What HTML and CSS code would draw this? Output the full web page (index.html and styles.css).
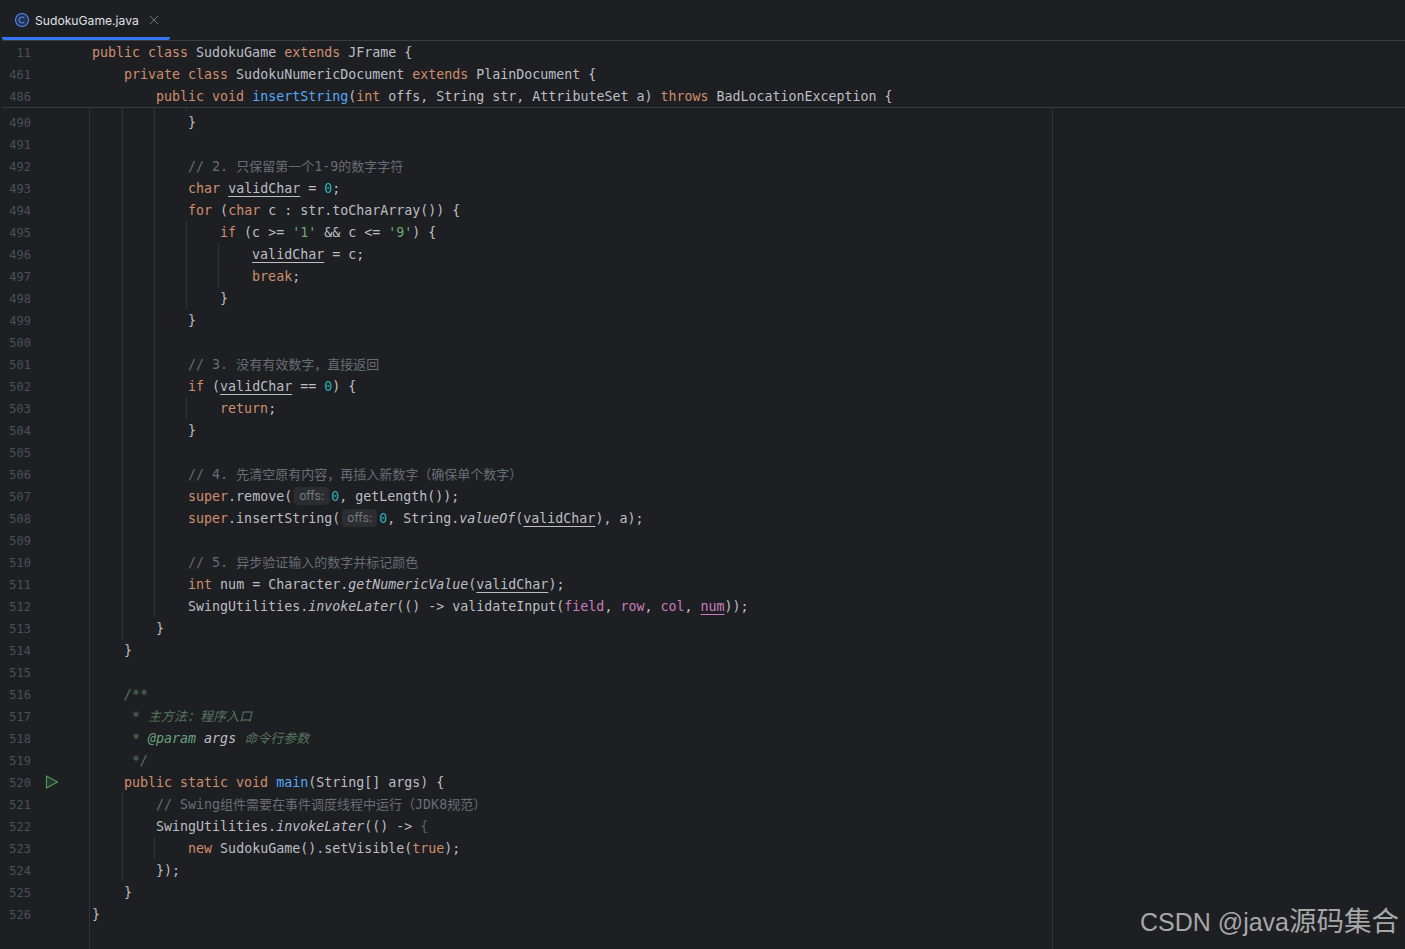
FILE: index.html
```html
<!DOCTYPE html>
<html lang="zh">
<head>
<meta charset="utf-8">
<title>SudokuGame.java</title>
<link rel="stylesheet" href="styles.css">
</head>
<body>
<div class="ide">
  <header class="tabbar">
    <div class="tab">
      <svg class="tab-icon" width="16" height="16" viewBox="0 0 16 16"><circle cx="8" cy="8" r="6.5" fill="#25324d" stroke="#548af7" stroke-width="1.1"/><path d="M10.4 6.1A3 3 0 1 0 10.4 9.9" fill="none" stroke="#548af7" stroke-width="1.1"/></svg>
      <span class="tab-name">SudokuGame.java</span>
      <svg class="tab-close" width="10" height="10" viewBox="0 0 10 10"><path d="M1 1L9 9M9 1L1 9" stroke="#6f737a" stroke-width="1"/></svg>
    </div>
  </header>
  <section class="sticky">
    <div class="line"><span class="num">11</span><span class="mark"></span><code class="code"><b>public class</b> SudokuGame <b>extends</b> JFrame {</code></div>
    <div class="line"><span class="num">461</span><span class="mark"></span><code class="code">    <b>private class</b> SudokuNumericDocument <b>extends</b> PlainDocument {</code></div>
    <div class="line"><span class="num">486</span><span class="mark"></span><code class="code">        <b>public void</b> <em class="f">insertString</em>(<b>int</b> offs, String str, AttributeSet a) <b>throws</b> BadLocationException {</code></div>
  </section>
  <main class="body">
    <div class="lead d4"></div>
    <div class="line d3"><span class="num">490</span><span class="mark"></span><code class="code">            }</code></div>
    <div class="line d3"><span class="num">491</span><span class="mark"></span><code class="code"></code></div>
    <div class="line d3"><span class="num">492</span><span class="mark"></span><code class="code">            <span class="c">// 2. <span class="cjk">只保留第一个</span>1-9<span class="cjk">的数字字符</span></span></code></div>
    <div class="line d3"><span class="num">493</span><span class="mark"></span><code class="code">            <b>char</b> <u>validChar</u> = <span class="n">0</span>;</code></div>
    <div class="line d3"><span class="num">494</span><span class="mark"></span><code class="code">            <b>for</b> (<b>char</b> c : str.toCharArray()) {</code></div>
    <div class="line d4"><span class="num">495</span><span class="mark"></span><code class="code">                <b>if</b> (c &gt;= <span class="s">'1'</span> &amp;&amp; c &lt;= <span class="s">'9'</span>) {</code></div>
    <div class="line d5"><span class="num">496</span><span class="mark"></span><code class="code">                    <u>validChar</u> = c;</code></div>
    <div class="line d5"><span class="num">497</span><span class="mark"></span><code class="code">                    <b>break</b>;</code></div>
    <div class="line d4"><span class="num">498</span><span class="mark"></span><code class="code">                }</code></div>
    <div class="line d3"><span class="num">499</span><span class="mark"></span><code class="code">            }</code></div>
    <div class="line d3"><span class="num">500</span><span class="mark"></span><code class="code"></code></div>
    <div class="line d3"><span class="num">501</span><span class="mark"></span><code class="code">            <span class="c">// 3. <span class="cjk">没有有效数字，直接返回</span></span></code></div>
    <div class="line d3"><span class="num">502</span><span class="mark"></span><code class="code">            <b>if</b> (<u>validChar</u> == <span class="n">0</span>) {</code></div>
    <div class="line d4"><span class="num">503</span><span class="mark"></span><code class="code">                <b>return</b>;</code></div>
    <div class="line d3"><span class="num">504</span><span class="mark"></span><code class="code">            }</code></div>
    <div class="line d3"><span class="num">505</span><span class="mark"></span><code class="code"></code></div>
    <div class="line d3"><span class="num">506</span><span class="mark"></span><code class="code">            <span class="c">// 4. <span class="cjk">先清空原有内容，再插入新数字（确保单个数字）</span></span></code></div>
    <div class="line d3"><span class="num">507</span><span class="mark"></span><code class="code">            <b>super</b>.remove(<span class="hint">offs:</span><span class="n">0</span>, getLength());</code></div>
    <div class="line d3"><span class="num">508</span><span class="mark"></span><code class="code">            <b>super</b>.insertString(<span class="hint">offs:</span><span class="n">0</span>, String.<i>valueOf</i>(<u>validChar</u>), a);</code></div>
    <div class="line d3"><span class="num">509</span><span class="mark"></span><code class="code"></code></div>
    <div class="line d3"><span class="num">510</span><span class="mark"></span><code class="code">            <span class="c">// 5. <span class="cjk">异步验证输入的数字并标记颜色</span></span></code></div>
    <div class="line d3"><span class="num">511</span><span class="mark"></span><code class="code">            <b>int</b> num = Character.<i>getNumericValue</i>(<u>validChar</u>);</code></div>
    <div class="line d3"><span class="num">512</span><span class="mark"></span><code class="code">            SwingUtilities.<i>invokeLater</i>(() -&gt; validateInput(<span class="v">field</span>, <span class="v">row</span>, <span class="v">col</span>, <u class="v">num</u>));</code></div>
    <div class="line d2"><span class="num">513</span><span class="mark"></span><code class="code">        }</code></div>
    <div class="line d1"><span class="num">514</span><span class="mark"></span><code class="code">    }</code></div>
    <div class="line d1"><span class="num">515</span><span class="mark"></span><code class="code"></code></div>
    <div class="line d1"><span class="num">516</span><span class="mark"></span><code class="code">    <span class="doc">/**</span></code></div>
    <div class="line d1"><span class="num">517</span><span class="mark"></span><code class="code">     <span class="doc">* <span class="cjk">主方法：程序入口</span></span></code></div>
    <div class="line d1"><span class="num">518</span><span class="mark"></span><code class="code">     <span class="doc">* <span class="tag">@param</span> <span class="arg">args</span> <span class="cjk">命令行参数</span></span></code></div>
    <div class="line d1"><span class="num">519</span><span class="mark"></span><code class="code">     <span class="doc">*/</span></code></div>
    <div class="line d1"><span class="num">520</span><span class="mark"><svg class="run" width="14" height="14" viewBox="0 0 14 14"><path d="M1.5 1L12.5 7L1.5 13Z" fill="#21382a" stroke="#57965c" stroke-width="1.2" stroke-linejoin="round"/></svg></span><code class="code">    <b>public static void</b> <em class="f">main</em>(String[] args) {</code></div>
    <div class="line d2"><span class="num">521</span><span class="mark"></span><code class="code">        <span class="c">// Swing<span class="cjk">组件需要在事件调度线程中运行（</span>JDK8<span class="cjk">规范）</span></span></code></div>
    <div class="line d2"><span class="num">522</span><span class="mark"></span><code class="code">        SwingUtilities.<i>invokeLater</i>(() -&gt; <span class="dim">{</span></code></div>
    <div class="line d3"><span class="num">523</span><span class="mark"></span><code class="code">            <b>new</b> SudokuGame().setVisible(<b>true</b>);</code></div>
    <div class="line d2"><span class="num">524</span><span class="mark"></span><code class="code">        });</code></div>
    <div class="line d1"><span class="num">525</span><span class="mark"></span><code class="code">    }</code></div>
    <div class="line d1"><span class="num">526</span><span class="mark"></span><code class="code">}</code></div>
    <div class="rest d1"></div>
  </main>
  <div class="watermark">CSDN @java<span class="wm-cjk">源码集合</span></div>
</div>
</body>
</html>
```
FILE: styles.css
```css
html, body {
  margin: 0;
  height: 100%;
  background: #1e1f22;
}

.ide {
  --guide: linear-gradient(#313438, #313438);
  position: relative;
  display: flex;
  flex-direction: column;
  height: 949px;
  overflow: hidden;
  background: #1e1f22;
  color: #bcbec4;
  font-family: "DejaVu Sans Mono", "Noto Sans CJK SC", monospace;
  font-size: 13.3px;
}

.tabbar {
  display: flex;
  flex: none;
  height: 40px;
  margin-left: 2px;
  box-sizing: content-box;
  border-bottom: 1px solid #393b40;
}

.tab {
  display: flex;
  align-items: center;
  width: 168px;
  height: 40px;
  box-sizing: border-box;
  padding: 0 0 0 12px;
  border-bottom: 3px solid #3574f0;
  border-radius: 0 0 2px 2px;
  font-family: Inter, "Noto Sans", sans-serif;
}

.tab-icon {
  flex: none;
  margin-top: 3px;
}

.tab-name {
  margin: 3px 0 0 5px;
  font-size: 12.15px;
  color: #dfe1e5;
  white-space: nowrap;
}

.tab-close {
  flex: none;
  margin: 2px 0 0 10px;
}

.sticky {
  flex: none;
  margin-left: 2px;
  padding-left: 0;
  border-bottom: 1px solid #393b40;
}

.sticky .num {
  width: 29px;
}

.sticky .mark {
  width: 61px;
}

.body {
  flex: 1;
  display: flex;
  flex-direction: column;
  background: var(--guide) 1052px 0 / 1px 100% no-repeat;
}

.lead {
  height: 3px;
  flex: none;
}

.rest {
  flex: 1;
}

.line {
  display: flex;
  flex: none;
  height: 22px;
  line-height: 24px;
}

.num {
  flex: none;
  width: 31px;
  text-align: right;
  font-size: 12px;
  color: #4b5059;
}

.mark {
  flex: none;
  display: flex;
  align-items: center;
  width: 61px;
}

.run {
  margin-left: 14px;
}

.code {
  font: inherit;
  white-space: pre;
}

.d1 {
  background: var(--guide) 89px 0 / 1px 100% no-repeat;
}

.d2 {
  background:
    var(--guide) 89px 0 / 1px 100% no-repeat,
    var(--guide) 122px 0 / 1px 100% no-repeat;
}

.d3 {
  background:
    var(--guide) 89px 0 / 1px 100% no-repeat,
    var(--guide) 122px 0 / 1px 100% no-repeat,
    var(--guide) 154px 0 / 1px 100% no-repeat;
}

.d4 {
  background:
    var(--guide) 89px 0 / 1px 100% no-repeat,
    var(--guide) 122px 0 / 1px 100% no-repeat,
    var(--guide) 154px 0 / 1px 100% no-repeat,
    var(--guide) 186px 0 / 1px 100% no-repeat;
}

.d5 {
  background:
    var(--guide) 89px 0 / 1px 100% no-repeat,
    var(--guide) 122px 0 / 1px 100% no-repeat,
    var(--guide) 154px 0 / 1px 100% no-repeat,
    var(--guide) 186px 0 / 1px 100% no-repeat,
    var(--guide) 218px 0 / 1px 100% no-repeat;
}

b {
  font-weight: normal;
  color: #cf8e6d;
}

em.f {
  font-style: normal;
  color: #56a8f5;
}

i {
  font-style: italic;
}

u {
  text-decoration: underline 1px;
  text-underline-offset: 3px;
}

.n {
  color: #2aacb8;
}

.s {
  color: #6aab73;
}

.v {
  color: #c77dbb;
}

.c {
  color: #696d74;
}

.dim {
  color: #5a5d63;
}

.cjk {
  font-size: 13px;
}

.doc {
  font-style: italic;
  color: #557561;
}

.tag {
  color: #67a37c;
}

.arg {
  color: #bcbec4;
}

.hint {
  display: inline-block;
  width: 35px;
  height: 18px;
  box-sizing: border-box;
  margin: 0 2px;
  padding-left: 5px;
  line-height: 17px;
  vertical-align: 1px;
  border-radius: 4px;
  background: #2b2d30;
  color: #787a80;
  font-family: Inter, "Noto Sans", sans-serif;
  font-size: 12px;
}

.watermark {
  position: absolute;
  right: 6px;
  bottom: 9px;
  font-family: "Liberation Sans", "Noto Sans CJK SC", sans-serif;
  font-size: 25px;
  line-height: 36px;
  color: #a6a7a8;
  white-space: nowrap;
}

.wm-cjk {
  font-size: 27.5px;
}
```
